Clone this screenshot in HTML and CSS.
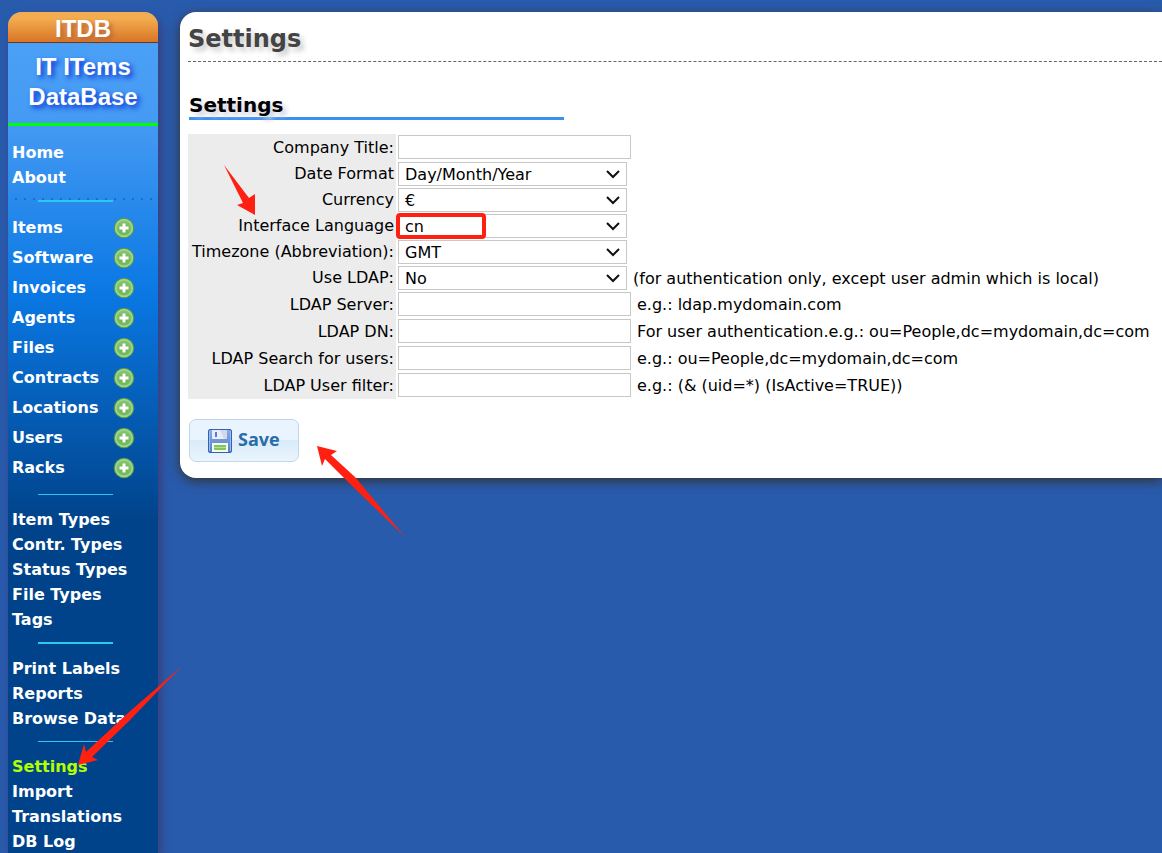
FILE: index.html
```html
<!DOCTYPE html>
<html lang="en">
<head>
<meta charset="utf-8">
<title>ITDB - Settings</title>
<link rel="stylesheet" href="styles.css">
</head>
<body>
<svg class="defs" width="0" height="0" aria-hidden="true">
  <defs>
    <radialGradient id="plusFill" cx="50%" cy="62%" r="55%">
      <stop offset="0" stop-color="#5fae45"/>
      <stop offset="1" stop-color="#86c470"/>
    </radialGradient>
    <symbol id="plus" viewBox="0 0 22 22">
      <circle cx="11" cy="11" r="10.300" fill="#4d9a4a"/>
      <circle cx="11" cy="11" r="9.200" fill="#a5d494"/>
      <circle cx="11" cy="11" r="7.600" fill="url(#plusFill)"/>
      <path d="M11 6.500v9M6.500 11h9" stroke="#fff" stroke-width="3"/>
    </symbol>
  </defs>
</svg>
<div class="page">
  <aside class="sidebar">
    <div class="brand">ITDB</div>
    <div class="tagline">IT ITems<br>DataBase</div>
    <nav class="menu">
      <ul class="group">
        <li><a href="#">Home</a></li>
        <li><a href="#">About</a></li>
      </ul>
      <hr class="rule dotted">
      <ul class="group roomy">
        <li><a href="#">Items</a><a class="add" href="#" aria-label="Add item"><svg><use href="#plus"/></svg></a></li>
        <li><a href="#">Software</a><a class="add" href="#" aria-label="Add software"><svg><use href="#plus"/></svg></a></li>
        <li><a href="#">Invoices</a><a class="add" href="#" aria-label="Add invoice"><svg><use href="#plus"/></svg></a></li>
        <li><a href="#">Agents</a><a class="add" href="#" aria-label="Add agent"><svg><use href="#plus"/></svg></a></li>
        <li><a href="#">Files</a><a class="add" href="#" aria-label="Add file"><svg><use href="#plus"/></svg></a></li>
        <li><a href="#">Contracts</a><a class="add" href="#" aria-label="Add contract"><svg><use href="#plus"/></svg></a></li>
        <li><a href="#">Locations</a><a class="add" href="#" aria-label="Add location"><svg><use href="#plus"/></svg></a></li>
        <li><a href="#">Users</a><a class="add" href="#" aria-label="Add user"><svg><use href="#plus"/></svg></a></li>
        <li><a href="#">Racks</a><a class="add" href="#" aria-label="Add rack"><svg><use href="#plus"/></svg></a></li>
      </ul>
      <hr class="rule thin">
      <ul class="group">
        <li><a href="#">Item Types</a></li>
        <li><a href="#">Contr. Types</a></li>
        <li><a href="#">Status Types</a></li>
        <li><a href="#">File Types</a></li>
        <li><a href="#">Tags</a></li>
      </ul>
      <hr class="rule">
      <ul class="group">
        <li><a href="#">Print Labels</a></li>
        <li><a href="#">Reports</a></li>
        <li><a href="#">Browse Data</a></li>
      </ul>
      <hr class="rule thin">
      <ul class="group">
        <li><a class="current" href="#">Settings</a></li>
        <li><a href="#">Import</a></li>
        <li><a href="#">Translations</a></li>
        <li><a href="#">DB Log</a></li>
      </ul>
    </nav>
  </aside>

  <main class="panel">
    <h1>Settings</h1>
    <form>
      <h2>Settings</h2>
      <table class="fields">
        <tr class="tall"><th><label for="company">Company Title:</label></th><td><input type="text" id="company"></td></tr>
        <tr><th><label for="date">Date Format</label></th><td><select id="date"><option>Day/Month/Year</option></select></td></tr>
        <tr><th><label for="currency">Currency</label></th><td><select id="currency"><option>€</option></select></td></tr>
        <tr><th><label for="lang">Interface Language</label></th><td><div class="marked"><select id="lang"><option>cn</option></select></div></td></tr>
        <tr><th><label for="tz">Timezone (Abbreviation):</label></th><td><select id="tz"><option>GMT</option></select></td></tr>
        <tr><th><label for="ldap">Use LDAP:</label></th><td><select id="ldap"><option>No</option></select><span class="hint">(for authentication only, except user admin which is local)</span></td></tr>
        <tr class="tall"><th><label for="server">LDAP Server:</label></th><td><input type="text" id="server"><span class="hint">e.g.: ldap.mydomain.com</span></td></tr>
        <tr class="tall"><th><label for="dn">LDAP DN:</label></th><td><input type="text" id="dn"><span class="hint">For user authentication.e.g.: ou=People,dc=mydomain,dc=com</span></td></tr>
        <tr class="tall"><th><label for="search">LDAP Search for users:</label></th><td><input type="text" id="search"><span class="hint">e.g.: ou=People,dc=mydomain,dc=com</span></td></tr>
        <tr class="tall"><th><label for="filter">LDAP User filter:</label></th><td><input type="text" id="filter"><span class="hint">e.g.: (&amp; (uid=*) (IsActive=TRUE))</span></td></tr>
      </table>
      <button class="save" type="submit">
        <svg width="24" height="24" viewBox="0 0 24 24" aria-hidden="true">
          <defs>
            <linearGradient id="disk" x1="0" y1="0" x2="0" y2="1">
              <stop offset="0" stop-color="#86ace4"/>
              <stop offset="1" stop-color="#5580c8"/>
            </linearGradient>
          </defs>
          <rect x="0.500" y="0.500" width="23" height="23" rx="1.500" fill="url(#disk)" stroke="#2f62b8"/>
          <path d="M1.500 2v20M22.500 2v20" stroke="#9dbcec"/>
          <rect x="4" y="1" width="15" height="9" fill="#e9edf5"/>
          <path d="M12 1h7v9h-3z" fill="#d3d9e8"/>
          <rect x="7" y="3" width="2" height="5" fill="#5580c8"/>
          <rect x="4" y="14" width="16" height="9" fill="#f4faee"/>
          <rect x="6" y="16" width="12" height="5" fill="#84c65a"/>
          <path d="M6 18.500h12" stroke="#b4dd9a"/>
        </svg>
        <span>Save</span>
      </button>
    </form>
  </main>
</div>
<svg class="arrows" width="420" height="780" aria-hidden="true">
  <path d="M224 165L249 198L255 194L255 215L237 205L243 203Z"/>
  <path d="M317 446L337 451L331 455L355 477L405 537L345 479L325 459L322 466Z"/>
  <path d="M182 666L130 720L92 757L98 760L78 765L84 744L86 752L128 713Z"/>
</svg>
</body>
</html>
```
FILE: styles.css
```css
* {
  box-sizing: border-box;
}

body {
  margin: 0;
  background: #295bac;
  font: 16px/20px Verdana, "DejaVu Sans", sans-serif;
  color: #000;
}

.defs {
  position: absolute;
}

.page {
  display: flex;
  align-items: flex-start;
  gap: 22px;
  height: 100vh;
  padding: 12px 0 0 8px;
  overflow: hidden;
}

/* Sidebar */
.sidebar {
  flex: 0 0 150px;
  align-self: stretch;
  border-radius: 14px 14px 0 0;
  background: linear-gradient(#4a9ff6 30px, #459af3 110px, #0a78e4 280px, #00438a 510px);
  box-shadow: 3px 5px 10px #3c3c78;
}

.brand {
  height: 31px;
  border-bottom: 1px solid #5c3a2c;
  border-radius: 14px 14px 0 0;
  background: linear-gradient(#f3ad50 20%, #d97527);
  font: bold 24px/34px "Liberation Sans", Arial, sans-serif;
  text-align: center;
  color: #fff;
  text-shadow: 3px 3px 4px #b7683c;
}

.tagline {
  padding: 9px 0 11px;
  border-bottom: 3px solid #00ff00;
  font: bold 24px/30px "Liberation Sans", Arial, sans-serif;
  text-align: center;
  color: #fff;
  text-shadow: 3px 3px 5px #0a32d8;
}

.menu {
  padding-top: 14px;
  font-weight: bold;
  line-height: 25px;
}

.group {
  margin: 0;
  padding: 0 4px;
  list-style: none;
}

.group li {
  display: flex;
  align-items: center;
  justify-content: space-between;
  padding-right: 19px;
  white-space: nowrap;
}

.roomy {
  padding-bottom: 1px;
  line-height: 30px;
}

.menu a {
  color: #fff;
  text-decoration: none;
}

.menu .current {
  color: #b4ff00;
}

.add,
.add svg {
  display: block;
  width: 22px;
  height: 22px;
}

.rule {
  width: 75px;
  height: 2px;
  margin: 10px 0 12px 30px;
  border: 0;
  background: #2cc8f5;
}

.thin {
  height: 1px;
}

.dotted {
  position: relative;
  margin-bottom: 11px;
  overflow: visible;
}

.dotted::before {
  content: "";
  position: absolute;
  left: -23px;
  top: -2px;
  width: 140px;
  height: 2px;
  background: repeating-linear-gradient(90deg, #1c6ccb 0 2px, transparent 2px 9px);
}

/* Content */
.panel {
  flex: 1;
  min-width: 0;
  padding: 9px 0 16px 8px;
  border-radius: 16px 0 0 16px;
  background: #fff;
  box-shadow: 0 3px 12px #333;
}

h1 {
  margin: 0 0 31px;
  padding-bottom: 4px;
  border-bottom: 1px dashed #666;
  font-size: 24px;
  line-height: 36px;
  color: #444;
  text-shadow: 4px 4px 5px #ccc;
}

h2 {
  width: 375px;
  margin: 0 0 14px 1px;
  border-bottom: 3px solid #3991ee;
  font-size: 20px;
  line-height: 24px;
  text-shadow: 4px 4px 5px #ccd;
}

.fields {
  border-collapse: collapse;
}

.fields tr {
  height: 26px;
}

.fields .tall {
  height: 27px;
}

.fields th {
  min-width: 208px;
  padding: 0 2px 0 1px;
  background: #ececec;
  font-weight: normal;
  text-align: right;
  white-space: nowrap;
}

.fields td {
  display: flex;
  align-items: flex-start;
  gap: 6px;
  padding: 1px 2px;
  white-space: nowrap;
}

.fields input,
.fields select {
  height: 24px;
  border: 1px solid #c8c8c8;
  background: #fff;
  font: inherit;
  color: #000;
}

.fields input {
  width: 233px;
}

.fields select {
  width: 229px;
  padding: 1px 6px 0;
  border-radius: 0;
  appearance: none;
  background: #fff url("data:image/svg+xml,%3Csvg xmlns='http://www.w3.org/2000/svg' width='14' height='9'%3E%3Cpath d='M1 1l6 6 6-6' fill='none' stroke='%23111' stroke-width='2'/%3E%3C/svg%3E") no-repeat right 6px center;
}

.hint {
  padding-top: 3px;
}

.marked {
  position: relative;
  display: flex;
}

.marked::after {
  content: "";
  box-sizing: border-box;
  position: absolute;
  left: -2px;
  top: -1px;
  width: 90px;
  height: 26px;
  border: 4px solid #ff2012;
  border-radius: 4px;
}

.save {
  display: flex;
  align-items: center;
  gap: 6px;
  margin: 20px 0 0 1px;
  height: 43px;
  padding: 0 18px;
  border: 1px solid #c0d8ec;
  border-radius: 7px;
  background: linear-gradient(#e9f4fe 50%, #d9ebf9 50%, #eaf5fd);
  font: bold 18px/24px "Open Sans", sans-serif;
  color: #2a6ca6;
}

.save span {
  padding-bottom: 3px;
}

.arrows {
  position: absolute;
  left: 0;
  top: 0;
  fill: #ff2012;
  pointer-events: none;
}
```
